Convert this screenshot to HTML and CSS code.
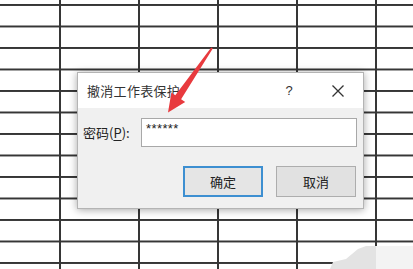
FILE: index.html
```html
<!DOCTYPE html>
<html lang="zh-CN">
<head>
<meta charset="utf-8">
<title>撤消工作表保护</title>
<link rel="stylesheet" href="styles.css">
</head>
<body>
<div class="sheet"></div>
<div class="dialog">
  <div class="titlebar">
    <span class="title">撤消工作表保护</span>
    <span class="help">?</span>
    <span class="close"><svg width="14" height="14" viewBox="0 0 14 14"><path d="M1.5 1.5 L12.5 12.5 M12.5 1.5 L1.5 12.5" stroke="#333" stroke-width="1.3" fill="none"/></svg></span>
  </div>
  <div class="content">
    <div class="row">
      <span class="label">密码(<u>P</u>):</span>
      <div class="input">******</div>
    </div>
    <div class="buttons">
      <div class="btn primary">确定</div>
      <div class="btn">取消</div>
    </div>
  </div>
</div>
<svg class="overlay" width="413" height="269" viewBox="0 0 413 269">
  <polygon class="wm-dark" points="330,269 333,262 346,259 352,254 358,249 366,246 376,246 376,269"/>
  <polygon class="wm-light" points="376,246 413,246 413,269 376,269"/>
  <polygon class="arrow" points="212.8,48.6 181.1,99.2 185.2,102 168,112.5 171.4,92.4 175.3,95.2 211.2,47.4"/>
</svg>
</body>
</html>
```
FILE: styles.css
```css
html, body {
  margin: 0;
  padding: 0;
}
body {
  width: 413px;
  height: 269px;
  overflow: hidden;
  position: relative;
  background: #fff;
  font-family: "Noto Sans CJK SC", "Liberation Sans", sans-serif;
}
.sheet {
  width: 413px;
  height: 269px;
  background-color: #fff;
  background-image:
    linear-gradient(to right, #363636 2px, transparent 2px),
    linear-gradient(to bottom, #363636 2px, transparent 2px);
  background-size: 79px 100%, 100% 21.5px;
  background-position: -20px 0, 0 4px;
}
.dialog {
  position: absolute;
  left: 77px;
  top: 72px;
  width: 285px;
  height: 135px;
  border: 1px solid #b4b4b4;
  box-shadow: 0 1px 8px rgba(0, 0, 0, 0.35);
  background: #f0f0f0;
  display: flex;
  flex-direction: column;
}
.titlebar {
  height: 35px;
  background: #fff;
  display: flex;
  align-items: center;
  padding-left: 9px;
}
.title {
  flex: 1;
  font-size: 13px;
  color: #333;
  letter-spacing: 0.3px;
}
.help {
  width: 24px;
  text-align: center;
  font-family: "Liberation Sans", sans-serif;
  font-size: 13px;
  color: #333;
  margin-right: 13px;
}
.close {
  width: 48px;
  height: 20px;
  display: flex;
  align-items: center;
  justify-content: center;
  margin-right: 1px;
}
.content {
  flex: 1;
  display: flex;
  flex-direction: column;
  padding: 10px 6px 11px 5px;
}
.row {
  display: flex;
  align-items: center;
  height: 29px;
}
.label {
  width: 58px;
  font-size: 13px;
  color: #222;
}
.label u {
  text-underline-offset: 2px;
}
.input {
  flex: 1;
  height: 25px;
  box-sizing: content-box;
  border: 1px solid #a8a8a8;
  background: #fff;
  font-family: "Liberation Sans", sans-serif;
  font-size: 13px;
  line-height: 16px;
  letter-spacing: 0.4px;
  padding-left: 4px;
  padding-top: 2px;
  color: #222;
}
.buttons {
  display: flex;
  justify-content: flex-end;
  gap: 13px;
  margin-top: 19px;
  padding-right: 1px;
}
.btn {
  width: 78px;
  height: 29px;
  border: 1px solid #adadad;
  background: #e1e1e1;
  display: flex;
  align-items: center;
  justify-content: center;
  font-size: 13px;
  color: #222;
}
.btn.primary {
  width: 76px;
  height: 27px;
  border: 2px solid #3d8fd1;
  background: #e5e5e5;
}
.overlay {
  position: absolute;
  left: 0;
  top: 0;
}
.arrow {
  fill: #e83a3e;
}
.wm-dark {
  fill: #e3e3e3;
}
.wm-light {
  fill: #f3f3f3;
}
```
